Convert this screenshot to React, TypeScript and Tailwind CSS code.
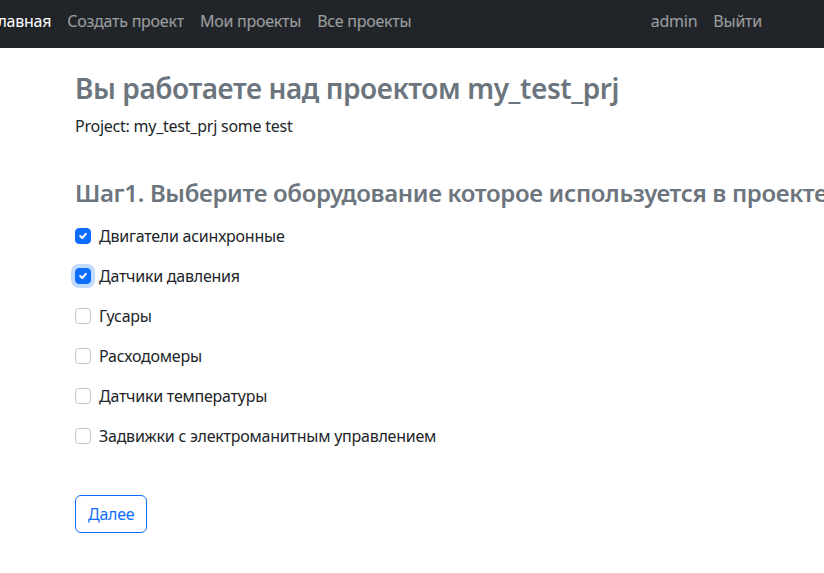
import { useState } from "react";

const navLinks = [
  { label: "Главная", active: true },
  { label: "Создать проект" },
  { label: "Мои проекты" },
  { label: "Все проекты" },
];

const equipment = [
  { label: "Двигатели асинхронные", checked: true },
  { label: "Датчики давления", checked: true, focused: true },
  { label: "Гусары", checked: false },
  { label: "Расходомеры", checked: false },
  { label: "Датчики температуры", checked: false },
  { label: "Задвижки с электроманитным управлением", checked: false },
];

function Checkbox({ checked, focused, onToggle }: { checked: boolean; focused?: boolean; onToggle: () => void }) {
  return (
    <button
      type="button"
      onClick={onToggle}
      className={`flex h-4 w-4 shrink-0 items-center justify-center rounded-[4px] border ${
        checked ? "border-[#0d6efd] bg-[#0d6efd]" : "border-[#c4c8cc] bg-white"
      } ${focused ? "shadow-[0_0_0_4px_rgba(13,110,253,0.25)]" : ""}`}
    >
      {checked && (
        <svg viewBox="0 0 20 20" className="h-4 w-4">
          <path
            d="M6 10l3 3 5-6"
            fill="none"
            stroke="white"
            strokeWidth={3}
            strokeLinecap="round"
            strokeLinejoin="round"
          />
        </svg>
      )}
    </button>
  );
}

export default function App() {
  const [items, setItems] = useState(equipment);

  return (
    <div className="h-screen w-full overflow-hidden bg-white font-['Noto_Sans',sans-serif] text-[16px] tracking-[-0.015em] text-[#212529]">
      <nav className="flex h-12 items-center bg-[#212529] pb-[6px] pr-[54px]">
        <div className="-ml-[18px] flex items-center">
          {navLinks.map((link) => (
            <a
              key={link.label}
              href="#"
              className={`whitespace-nowrap px-2 py-2 ${link.active ? "text-white" : "text-white/55"}`}
            >
              {link.label}
            </a>
          ))}
        </div>
        <div className="ml-auto flex items-center">
          <a href="#" className="px-2 py-2 text-white/55">
            admin
          </a>
          <a href="#" className="px-2 py-2 text-white/55">
            Выйти
          </a>
        </div>
      </nav>

      <main className="pl-[75px] pt-6">
        <h2 className="mb-2 whitespace-nowrap text-[28px] font-semibold leading-[1.2] tracking-[-0.015em] text-[#6c757d]">
          Вы работаете над проектом my_test_prj
        </h2>
        <p className="mb-4 leading-6">Project: my_test_prj some test</p>

        <h3 className="mt-[41px] mb-[17px] whitespace-nowrap text-[24px] font-semibold leading-[1.2] tracking-[-0.014em] text-[#6c757d]">
          Шаг1. Выберите оборудование которое используется в проекте:
        </h3>

        <div className="flex flex-col">
          {items.map((item, i) => (
            <label key={item.label} className="mb-4 flex h-6 items-center gap-2 leading-6">
              <Checkbox
                checked={item.checked}
                focused={item.focused}
                onToggle={() =>
                  setItems((prev) => prev.map((p, j) => (j === i ? { ...p, checked: !p.checked } : p)))
                }
              />
              <span>{item.label}</span>
            </label>
          ))}
        </div>

        <button
          type="button"
          className="mt-[31px] h-[38px] rounded-md border border-[#0d6efd] px-3 text-[#0d6efd]"
        >
          Далее
        </button>
      </main>
    </div>
  );
}
